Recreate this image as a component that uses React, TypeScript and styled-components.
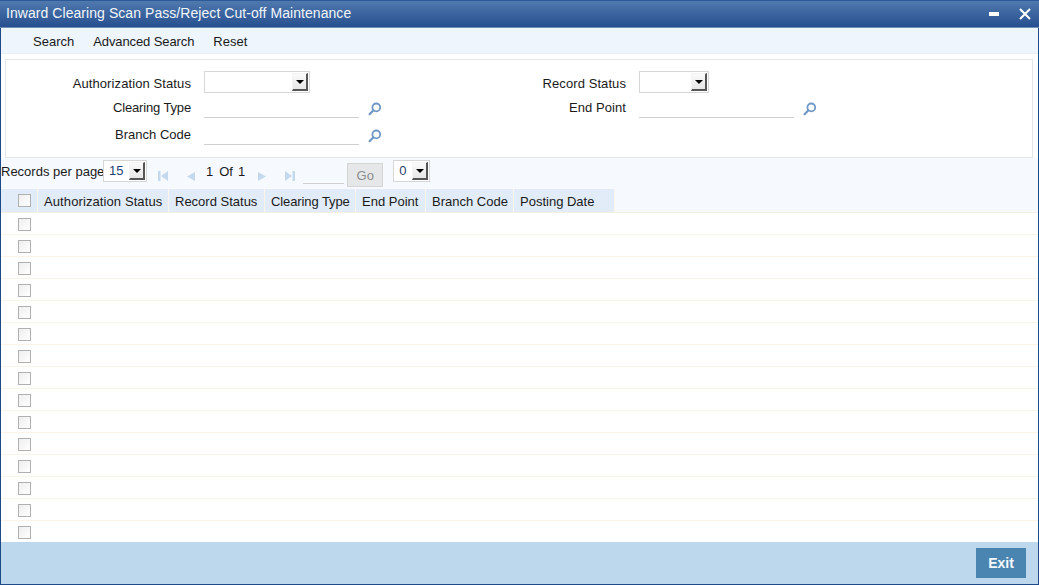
import React from "react";
import styled, { createGlobalStyle } from "styled-components";

const Global = createGlobalStyle`
  html, body { margin: 0; padding: 0; background: #fff; overflow: hidden; }
  body { font-family: "Liberation Sans", Arial, sans-serif; font-size: 13px; color: #1a1a1a; }
`;

const Window = styled.div`
  width: 1039px;
  height: 585px;
  box-sizing: border-box;
  border: solid #1f4a8a;
  border-width: 0 1px 1px 1px;
  display: flex;
  flex-direction: column;
  background: #fff;
`;
const TitleBar = styled.div`
  height: 28px;
  margin: 0 -1px;
  flex: none;
  box-sizing: border-box;
  border-top: 1px solid #2c5a96;
  border-bottom: 1px solid #6d8fb8;
  background: linear-gradient(#4f79ae, #264f8f);
  display: flex;
  align-items: center;
  justify-content: space-between;
  padding: 0 8px 0 6px;
`;
const Title = styled.span`
  color: #f2f6fb;
  font-size: 14px;
  letter-spacing: 0.06px;
  line-height: 24px;
  margin-bottom: 2px;
`;
const WinButtons = styled.div`
  display: flex;
  align-items: center;
  gap: 20px;
  margin-bottom: 1px;
`;
const ToolBar = styled.div`
  height: 26px;
  flex: none;
  box-sizing: border-box;
  background: #eef5fd;
  border-bottom: 1px solid #e9eff6;
  display: flex;
  align-items: center;
  padding: 2px 0 0 32px;
  gap: 19px;
`;
const ToolItem = styled.span<{ $ls?: number }>`
  font-size: 13px;
  letter-spacing: ${(p) => p.$ls ?? 0}px;
  color: #1a1a1a;
`;
const FormPanel = styled.div`
  height: 99px;
  flex: none;
  box-sizing: border-box;
  margin: 5px 5px 0 4px;
  border: 1px solid #e6e6e6;
  display: grid;
  grid-template-columns: 435px 1fr;
  padding-top: 11px;
`;
const FormCol = styled.div`
  display: flex;
  flex-direction: column;
`;
const FieldRow = styled.div<{ $h: number }>`
  height: ${(p) => p.$h}px;
  display: flex;
  align-items: flex-start;
`;
const Label = styled.span<{ $lh: number; $ls?: number }>`
  width: 185px;
  text-align: right;
  font-size: 13px;
  line-height: ${(p) => p.$lh}px;
  letter-spacing: ${(p) => p.$ls ?? 0}px;
  margin-right: 13px;
  flex: none;
`;
const SelectBox = styled.div<{ $w: number }>`
  width: ${(p) => p.$w}px;
  height: 22px;
  box-sizing: border-box;
  border: 1px solid #d6d6d6;
  display: flex;
  justify-content: flex-end;
  align-items: center;
  padding-right: 1px;
  background: #fff;
  font-size: 13px;
  color: #1f3f6f;
`;
const SelectValue = styled.span`
  flex: 1;
  padding-left: 5px;
  line-height: 20px;
`;
const ArrowBtn = styled.div`
  width: 16px;
  height: 18px;
  box-sizing: border-box;
  background: linear-gradient(#fafafa, #e6e6e6);
  border-style: solid;
  border-color: #f4f4f4 #555 #555 #f4f4f4;
  border-width: 1px 2px 2px 1px;
  display: flex;
  align-items: center;
  justify-content: center;
  &::after {
    content: "";
    border-style: solid;
    border-color: #000 transparent transparent transparent;
    border-width: 4px 4px 0 4px;
  }
`;
const TextField = styled.div`
  width: 155px;
  height: 21px;
  box-sizing: border-box;
  border-bottom: 1px solid #cfcfcf;
  flex: none;
`;
const SearchIcon = styled.svg`
  width: 14px;
  height: 14px;
  margin: 5px 0 0 9px;
  flex: none;
`;
const Pager = styled.div`
  height: 31px;
  flex: none;
  background: #f6f9fe;
  display: flex;
  align-items: center;
  font-size: 13px;
`;
const PagerLabel = styled.span`
  width: 102px;
  flex: none;
  margin-bottom: 5px;
  white-space: nowrap;
`;
const PageIcon = styled.svg<{ $ml: number }>`
  width: 12px;
  height: 12px;
  margin: 4px 0 0 ${(p) => p.$ml}px;
  flex: none;
`;
const PageText = styled.span<{ $ml: number }>`
  margin: 0 0 5px ${(p) => p.$ml}px;
`;
const PageInput = styled.div`
  width: 41px;
  height: 20px;
  margin-left: 7px;
  box-sizing: border-box;
  border-bottom: 1px solid #cfcfcf;
`;
const GoButton = styled.div`
  width: 36px;
  height: 24px;
  margin: 3px 0 0 3px;
  box-sizing: border-box;
  background: #e6e7e8;
  border: 1px solid #d5d5d5;
  color: #8c8c8c;
  text-align: center;
  line-height: 23px;
  font-size: 13px;
`;
const SmallSelect = styled(SelectBox)<{ $ml: number }>`
  margin-left: ${(p) => p.$ml}px;
  margin-bottom: 5px;
`;
const HeaderRow = styled.div`
  height: 24px;
  flex: none;
  display: flex;
  background: #f6f9fe;
  border-bottom: 1px solid #f6efe4;
  box-sizing: border-box;
`;
const HeadCell = styled.div<{ $w: number; $ls?: number }>`
  width: ${(p) => p.$w}px;
  box-sizing: border-box;
  background: #e1ecf8;
  border-right: 1px solid #fbf5e9;
  display: flex;
  align-items: center;
  padding: 2px 0 0 6px;
  font-size: 13px;
  letter-spacing: ${(p) => p.$ls ?? 0}px;
  flex: none;
  white-space: nowrap;
`;
const CheckHead = styled(HeadCell)`
  padding: 0 0 0 17px;
`;
const Check = styled.div`
  width: 13px;
  height: 13px;
  box-sizing: border-box;
  background: linear-gradient(135deg, #eeeeee, #fff);
  border: 1px solid #b0b0b0;
  flex: none;
`;
const Rows = styled.div`
  flex: 1;
  display: flex;
  flex-direction: column;
`;
const Row = styled.div`
  height: 22px;
  flex: none;
  box-sizing: border-box;
  border-bottom: 1px solid #fbf3e6;
  padding: 2px 0 0 17px;
  display: flex;
  align-items: center;
  &:last-child { border-bottom: 0; height: 21px; }
`;
const Footer = styled.div`
  height: 42px;
  flex: none;
  background: #bdd8ec;
  display: flex;
  justify-content: flex-end;
  padding: 6px 12px 0 0;
  box-sizing: border-box;
`;
const ExitButton = styled.div`
  width: 50px;
  height: 30px;
  background: #4a84b0;
  color: #f4f8fb;
  font-size: 14px;
  font-weight: 700;
  text-align: center;
  line-height: 30px;
`;

const Lens = () => (
  <SearchIcon viewBox="0 0 14 14">
    <circle cx="8.3" cy="5.4" r="3.9" fill="none" stroke="#6f97c6" strokeWidth="1.8" />
    <path d="M5.4 8.3 L1.6 12.2" stroke="#6f97c6" strokeWidth="2.2" strokeLinecap="round" />
  </SearchIcon>
);

const Nav = ({ kind, ml }: { kind: "first" | "prev" | "next" | "last"; ml: number }) => {
  const c = "#c5d9ee";
  return (
    <PageIcon $ml={ml} viewBox="0 0 12 12">
      {kind === "first" && <><rect x="1" y="1" width="2.5" height="10" fill={c} /><path d="M11 1V11L4 6Z" fill={c} /></>}
      {kind === "prev" && <path d="M10 2V11L2 6.5Z" fill={c} />}
      {kind === "next" && <path d="M2 2V11L10 6.5Z" fill={c} />}
      {kind === "last" && <><rect x="8.5" y="1" width="2.5" height="10" fill={c} /><path d="M1 1V11L8 6Z" fill={c} /></>}
    </PageIcon>
  );
};

const columns: [string, number, number][] = [
  ["Authorization Status", 131, 0.1],
  ["Record Status", 96, 0],
  ["Clearing Type", 91, -0.1],
  ["End Point", 70, 0],
  ["Branch Code", 88, 0],
  ["Posting Date", 101, 0],
];

export default function App() {
  return (
    <Window>
      <Global />
      <TitleBar>
        <Title>Inward Clearing Scan Pass/Reject Cut-off Maintenance</Title>
        <WinButtons>
          <svg width="10" height="4" viewBox="0 0 10 4"><rect width="10" height="4" y="0" fill="#fff" /></svg>
          <svg width="12" height="12" viewBox="0 0 12 12">
            <path d="M1 1L11 11M11 1L1 11" stroke="#fff" strokeWidth="2" />
          </svg>
        </WinButtons>
      </TitleBar>
      <ToolBar>
        <ToolItem>Search</ToolItem>
        <ToolItem $ls={-0.1}>Advanced Search</ToolItem>
        <ToolItem>Reset</ToolItem>
      </ToolBar>
      <FormPanel>
        <FormCol>
          <FieldRow $h={26}>
            <Label $lh={25} $ls={0.1}>Authorization Status</Label>
            <SelectBox $w={106}><ArrowBtn /></SelectBox>
          </FieldRow>
          <FieldRow $h={27}>
            <Label $lh={21} $ls={-0.15}>Clearing Type</Label>
            <TextField />
            <Lens />
          </FieldRow>
          <FieldRow $h={26}>
            <Label $lh={21}>Branch Code</Label>
            <TextField />
            <Lens />
          </FieldRow>
        </FormCol>
        <FormCol>
          <FieldRow $h={26}>
            <Label $lh={25} $ls={0.08}>Record Status</Label>
            <SelectBox $w={70}><ArrowBtn /></SelectBox>
          </FieldRow>
          <FieldRow $h={27}>
            <Label $lh={21} $ls={0.08}>End Point</Label>
            <TextField />
            <Lens />
          </FieldRow>
        </FormCol>
      </FormPanel>
      <Pager>
        <PagerLabel>Records per page</PagerLabel>
        <SmallSelect $ml={0} $w={44}><SelectValue>15</SelectValue><ArrowBtn /></SmallSelect>
        <Nav kind="first" ml={10} />
        <Nav kind="prev" ml={16} />
        <PageText $ml={9}>1</PageText>
        <PageText $ml={6}>Of</PageText>
        <PageText $ml={5}>1</PageText>
        <Nav kind="next" ml={11} />
        <Nav kind="last" ml={16} />
        <PageInput />
        <GoButton>Go</GoButton>
        <SmallSelect $ml={10} $w={37}><SelectValue>0</SelectValue><ArrowBtn /></SmallSelect>
      </Pager>
      <HeaderRow>
        <CheckHead $w={37}><Check /></CheckHead>
        {columns.map(([t, w, ls]) => <HeadCell key={t} $w={w} $ls={ls}>{t}</HeadCell>)}
      </HeaderRow>
      <Rows>
        {Array.from({ length: 15 }, (_, i) => <Row key={i}><Check /></Row>)}
      </Rows>
      <Footer><ExitButton>Exit</ExitButton></Footer>
    </Window>
  );
}
